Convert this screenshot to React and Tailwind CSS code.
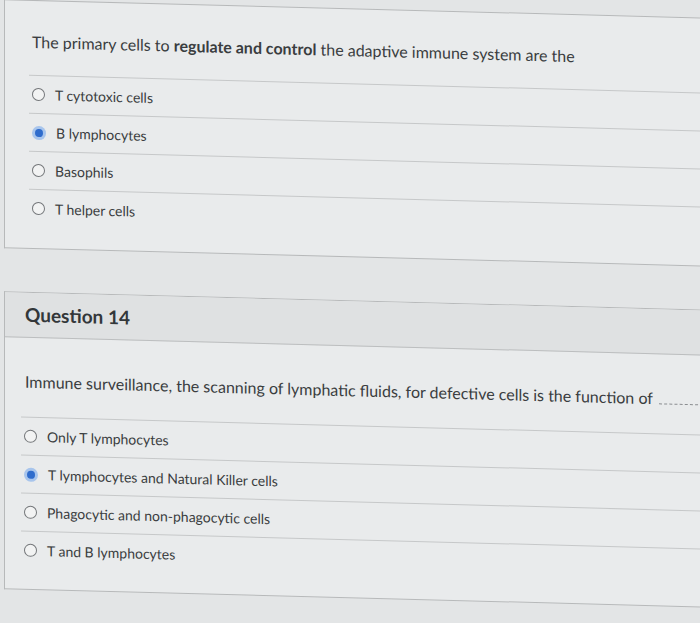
const Q1_ANSWERS = [
  { label: 'T cytotoxic cells' },
  { label: 'B lymphocytes', selected: true },
  { label: 'Basophils' },
  { label: 'T helper cells' },
]

const Q2_ANSWERS = [
  { label: 'Only T lymphocytes' },
  { label: 'T lymphocytes and Natural Killer cells', selected: true },
  { label: 'Phagocytic and non-phagocytic cells' },
  { label: 'T and B lymphocytes' },
]

function Radio({ selected }) {
  if (selected) {
    return (
      <span className="flex h-[14px] w-[14px] shrink-0 items-center justify-center rounded-full bg-[#a8c5ec]">
        <span className="h-[8px] w-[8px] rounded-full bg-[#2f6ccc]" />
      </span>
    )
  }
  return <span className="h-[13px] w-[13px] shrink-0 rounded-full border-[1.5px] border-[#74777a] bg-[#f2f3f3]" />
}

function AnswerList({ answers, indent }) {
  return (
    <div className={indent}>
      {answers.map((a) => (
        <div key={a.label} className="flex h-[38px] items-center gap-[10px] border-t border-[#c6c8c9] pl-[3px] text-[14px] text-[#3a3d40]">
          <Radio selected={a.selected} />
          <span>{a.label}</span>
        </div>
      ))}
    </div>
  )
}

export default function App() {
  return (
    <div className="h-[623px] w-[700px] overflow-hidden bg-[#e3e5e6] font-['Lato','Open_Sans',sans-serif]">
      <div className="w-[760px] origin-center skew-y-[1.5deg] pl-[4px] pt-[9px]">
        {/* previous question, header scrolled away */}
        <div className="border-y border-l border-[#b7b9ba] bg-[#e9ebec] pb-[21px] pt-[29px]">
          <p className="mb-[21px] pl-[27px] text-[16px] leading-[24px] text-[#3a3d40]">
            The primary cells to <strong className="font-bold">regulate and control</strong> the adaptive immune system are the
          </p>
          <AnswerList answers={Q1_ANSWERS} indent="ml-[24px]" />
        </div>

        <div className="mt-[43px] border-y border-l border-[#b7b9ba] bg-[#e9ebec]">
          <div className="flex h-[45px] items-center border-b border-[#bcbebf] bg-[#dfe1e2] pl-[20px]">
            <h2 className="text-[19px] font-bold text-[#33373a]">Question 14</h2>
          </div>
          <div className="pb-[20px] pt-[32px]">
            <p className="mb-[23px] whitespace-nowrap pl-[20px] text-[16px] leading-[24px] text-[#3a3d40]">
              Immune surveillance, the scanning of lymphatic fluids, for defective cells is the function of
              <span className="ml-[6px] inline-block w-[70px] border-b border-dashed border-[#8a8d90] align-baseline" />
            </p>
            <AnswerList answers={Q2_ANSWERS} indent="ml-[16px]" />
          </div>
        </div>
      </div>
    </div>
  )
}
